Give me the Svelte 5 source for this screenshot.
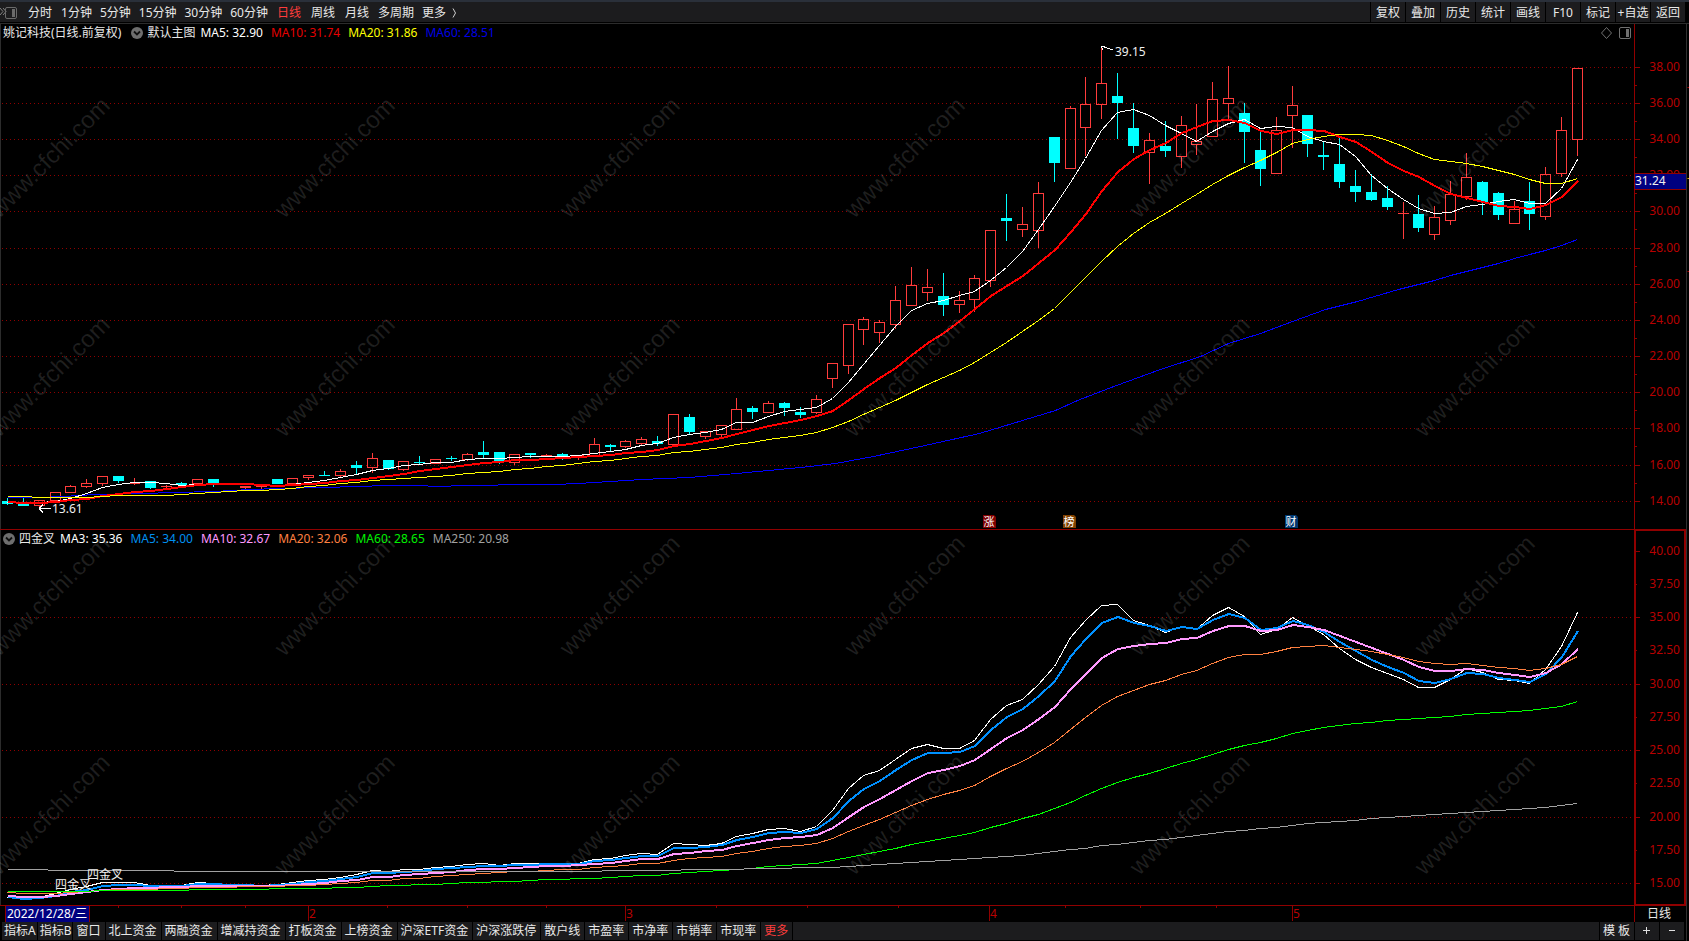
<script>
  const periods = [
    { label: '分时', wide: true }, { label: '1分钟' }, { label: '5分钟' }, { label: '15分钟' },
    { label: '30分钟' }, { label: '60分钟' }, { label: '日线', wide: true, active: true },
    { label: '周线', wide: true }, { label: '月线', wide: true }, { label: '多周期' }
  ];
  const tools = ['复权', '叠加', '历史', '统计', '画线', 'F10', '标记', '+自选', '返回'];
  const tabs = ['指标A', '指标B', '窗口', '北上资金', '两融资金', '增减持资金', '打板资金', '上榜资金', '沪深ETF资金',
    '沪深涨跌停', '散户线', '市盈率', '市净率', '市销率', '市现率', '更多'];

  const mainLegend = [
    ['MA5: 32.90', '#ffffff'], ['MA10: 31.74', '#e60000'], ['MA20: 31.86', '#ffff00'], ['MA60: 28.51', '#0000e6']
  ];
  const subLegend = [
    ['MA3: 35.36', '#ffffff'], ['MA5: 34.00', '#0090f0'], ['MA10: 32.67', '#ff99ff'],
    ['MA20: 32.06', '#ff8040'], ['MA60: 28.65', '#00f000'], ['MA250: 20.98', '#a0a0a0']
  ];

  // Each candle: direction (1 up, 0 down), high, body top, body bottom, low, as levels on the price pane.
  const candles = [
    [0,498,501,504,505],[0,498,504,506,506],[1,500,500,506,507],[1,492,492,501,501],[1,485,486,493,493],
    [1,479,483,487,488],[1,476,476,484,486],[0,476,476,481,483],[1,478,483,484,485],[0,481,481,488,489],
    [1,485,486,487,489],[0,482,483,485,485],[1,479,479,484,484],[0,479,479,483,487],[0,483,483,485,485],
    [1,486,486,488,489],[1,485,486,487,489],[0,479,479,484,484],[1,478,478,484,484],[1,475,475,478,480],
    [0,471,475,476,476],[1,469,471,476,477],[0,461,465,468,475],[1,453,458,468,473],[0,460,460,469,470],
    [1,461,461,470,471],[0,456,462,463,465],[1,459,459,464,464],[0,456,458,459,461],[1,453,454,460,461],
    [0,441,452,455,458],[0,452,452,461,464],[1,454,454,463,465],[0,453,453,455,458],[1,454,455,456,457],
    [0,453,454,456,460],[1,455,455,456,460],[1,438,444,457,457],[0,444,445,447,451],[1,440,441,447,448],
    [1,437,439,444,445],[0,436,441,444,446],[1,414,414,445,445],[0,414,417,432,434],[1,431,431,437,439],
    [1,425,425,435,437],[1,398,409,430,430],[0,406,408,412,419],[1,401,403,413,413],[0,402,403,408,416],
    [0,407,412,415,418],[1,395,399,413,414],[1,363,363,379,388],[1,324,324,366,374],[1,317,319,330,345],
    [1,320,322,333,343],[1,286,300,325,329],[1,267,285,306,306],[1,269,287,293,301],[0,273,296,305,316],
    [1,291,300,305,313],[1,275,278,300,312],[1,230,230,281,287],[0,194,218,221,241],[1,207,224,230,237],
    [1,182,193,231,248],[0,137,137,163,182],[1,106,108,169,169],[1,77,104,128,156],[1,47,83,105,119],
    [0,73,96,103,139],[0,103,128,146,153],[1,133,140,153,184],[0,121,146,151,157],[1,116,125,157,168],
    [1,104,141,145,155],[1,82,99,137,137],[1,66,98,104,119],[0,103,113,132,163],[0,132,150,169,186],
    [1,117,130,174,174],[1,86,105,116,148],[0,115,115,144,157],[0,142,155,157,170],[0,138,164,182,188],
    [0,170,186,192,202],[0,174,192,200,201],[0,186,198,207,210],[1,202,213,214,239],[0,195,214,228,232],
    [1,206,217,235,240],[1,181,194,221,225],[1,153,177,197,200],[0,181,182,202,215],[0,192,193,215,220],
    [1,201,209,224,224],[0,182,201,214,230],[1,167,174,217,220],[1,117,130,174,177],[1,68,68,140,156]
  ];
  const closes = candles.map((c) => (c[0] ? c[2] : c[3]));
  const history = [...Array(10).fill(490), ...Array(9).fill(501)];
  const series = [...history, ...closes];

  function sma(n) {
    return closes.map((_, i) => {
      const end = i + history.length + 1;
      return series.slice(end - n, end).reduce((a, b) => a + b, 0) / n;
    });
  }

  const toPrice = (y) => 38 - (y - 67) / 18.08;
  function ema(n, seed) {
    const a = 2 / (n + 1);
    let v = seed;
    return closes.map((c, i) => {
      if (i) v = a * toPrice(c) + (1 - a) * v;
      return 617 - (v - 35) * 13.3;
    });
  }

  // Long average of the price pane: [bar, level] knots.
  const slow = [
    [0,497],[2,497],[3.5,495.5],[5.5,494],[8.5,493],[10.5,492],[13,491],[15.3,489],[17,488],[20,487],[22,486],
    [24,485],[26,485],[27,486],[29,485],[33,484],[34.5,484],[36,483],[38,481],[40,479],[43,476.5],[46,473],
    [48,470],[50,467],[52.2,463],[54.6,456],[57.6,445.5],[61.3,433],[64,420],[66.1,409.5],[67.5,399.6],
    [69.9,384.5],[72.7,369],[75.2,355.7],[77,342.6],[79,333],[81,321],[83.1,309],[85.1,301],[87.7,289],
    [89,284],[90,280],[91,275],[92,271],[93,267],[94,263],[95,258],[96,254],[97,250],[98,245],[99,238.7]
  ];

  const averages = [
    { v: sma(5), c: '#ffffff', s: 1 }, { v: sma(10), c: '#ff0000', s: 2 }, { v: sma(20), c: '#ffff00', s: 1 }
  ];
  const golden = [
    { v: ema(3, 13.95), c: '#ffffff', s: 1 }, { v: ema(5, 14), c: '#0090ff', s: 2 },
    { v: ema(10, 14.1), c: '#ff99ff', s: 2 }, { v: ema(20, 14.3), c: '#ff8040', s: 1 },
    { v: ema(60, 14.4), c: '#00ff00', s: 1 }, { v: ema(250, 16.05), c: '#a0a0a0', s: 1 }
  ];

  const mainTicks = [67,103,139,175,211,248,284,320,356,392,428,465,501].map((y, i) => ({ y, t: (38 - i * 2).toFixed(2) }));
  const subTicks = Array.from({ length: 11 }, (_, i) => ({
    y: Math.round(550.5 + i * 33.28), t: (40 - i * 2.5).toFixed(2), major: i % 2 === 0
  }));
  const badges = [
    { x: 989, t: '涨', c: '#800000' }, { x: 1069, t: '榜', c: '#804000' }, { x: 1291, t: '财', c: '#003870' }
  ];
  const months = [[308, '2'], [625, '3'], [989, '4'], [1292, '5']];
  const minor = [118, 181, 245, 387, 467, 546, 716, 807, 898, 1065, 1140, 1216];

  let w = $state(1634);
  let hMain = $state(487);
  let hSub = $state(357);
  let pageW = $state(1689);
  let pageH = $state(941);

  const X = (i) => Math.round(7 + (i * (w - 64)) / 99);
  const sx = (x) => Math.round(7 + ((x - 7) * (w - 64)) / 1570);
  const M = (y) => Math.round(((y - 42) * hMain) / 487);
  const S = (y) => Math.round(((y - 548) * hSub) / 357);
  // Odd widths are centred on a pixel, even widths on a pixel edge.
  const path = (a, f) => {
    const o = a.s === 1 ? 0.5 : 1;
    return a.v.map((y, i) => `${X(i) + o},${f(y) + o}`).join(' ');
  };

  const marks = $derived.by(() => {
    const out = [];
    for (let y = 159; y < pageH; y += 219) for (let x = 51; x < pageW; x += 285) out.push([x, y]);
    return out;
  });
</script>

{#snippet fold()}
  <svg class="fold" width="12" height="12" viewBox="0 0 12 12" aria-hidden="true">
    <circle cx="6" cy="6" r="6" fill="#6e6e6e" />
    <path d="M3 4.5 6 7.5 9 4.5" fill="none" stroke="#101010" stroke-width="1.8" />
  </svg>
{/snippet}

<div class="app" bind:clientWidth={pageW} bind:clientHeight={pageH}>
  <header>
    <button class="dock" aria-label="侧栏">
      <svg width="18" height="14" viewBox="0 0 18 14" fill="none" stroke="#808080">
        <path d="M0 2 3 5.5 0 9M3 2 6 5.5 3 9" />
        <rect x="5.5" y="1.5" width="11" height="11" rx="1.5" stroke="#6a6a6a" />
        <rect x="12" y="3" width="3" height="8" fill="#6a6a6a" stroke="none" />
      </svg>
    </button>
    <nav class="periods">
      {#each periods as p}
        <button class:wide={p.wide} class:active={p.active}>{p.label}</button>
      {/each}
      <button class="more">更多
        <svg width="5" height="10" viewBox="0 0 5 10" aria-hidden="true"><path d="M1 0.5 3.5 5 1 9.5" fill="none" stroke="#d0d0d0" /></svg>
      </button>
    </nav>
    <nav class="tools">
      {#each tools as t}<button>{t}</button>{/each}
    </nav>
  </header>

  <div class="body">
    <main>
      <section class="pane price">
        <div class="plot">
          <div class="legend">
            <span class="name">姚记科技(日线.前复权)</span>
            {@render fold()}
            <span class="ind">默认主图</span>
            {#each mainLegend as [t, c]}<span class="val" style:color={c}>{t}</span>{/each}
            <span class="corner">
              <svg width="30" height="12" viewBox="0 0 30 12" fill="none" stroke="#707070" aria-hidden="true">
                <path d="M5.5.5 10.5 6 5.5 11.5.5 6Z" />
                <rect x="18.5" y="0.5" width="11" height="11" rx="1.5" />
                <rect x="25" y="2" width="3" height="8" fill="#707070" stroke="none" />
              </svg>
            </span>
          </div>
          <div class="canvas" bind:clientWidth={w} bind:clientHeight={hMain}>
            <svg class="chart">
              <g class="crisp">
                {#each mainTicks as g}
                  <line class="grid" x1="2" x2={w} y1={M(g.y) + 0.5} y2={M(g.y) + 0.5} />
                {/each}
                {#each candles as [up, hi, top, bot, lo], i}
                  {@const x = X(i)}
                  {@const t = M(top)}
                  {@const b = Math.max(M(bot), t + 1)}
                  <path stroke={up ? '#ff3c3c' : '#00ffff'} d="M{x + 0.5} {M(hi)}V{t}M{x + 0.5} {b}V{M(lo)}" />
                  {#if up && b - t > 1}
                    <rect x={x - 4.5} y={t + 0.5} width="10" height={b - t - 1} fill="none" stroke="#ff3c3c" />
                  {:else}
                    <rect x={x - 5} y={t} width="11" height={b - t} fill={up ? '#ff3c3c' : '#00ffff'} />
                  {/if}
                {/each}
                <polyline fill="none" stroke="#0000ff" points={slow.map(([i, y]) => `${X(i) + 0.5},${M(y) + 0.5}`).join(' ')} />
                {#each averages as a}
                  <polyline fill="none" stroke={a.c} stroke-width={a.s} points={path(a, M)} />
                {/each}
                <path class="arrow" d="M{sx(1101)} {M(46)}l12 4m-12 -4h4m-4 0l2 4" />
                <path class="arrow" d="M{sx(39)} {M(508) + 0.5}h12m-12 0l4 -4m-4 4l4 4" />
              </g>
              <text class="note" x={sx(1115)} y={M(52) + 4}>39.15</text>
              <text class="note" x={sx(52)} y={M(508) + 5}>13.61</text>
              {#each badges as b}
                <path d="M{sx(b.x) - 6} {M(515)}h11l2 2v11h-13z" fill={b.c} />
                <text class="badge" x={sx(b.x)} y={M(515) + 11}>{b.t}</text>
              {/each}
            </svg>
          </div>
        </div>
        <div class="axis">
          <div class="axis-head"></div>
          <svg class="scale">
            {#each mainTicks as g, i}
              <rect x="0" y={M(g.y)} width="5" height="1" fill="#900000" />
              {#if i < 12}<rect x="0" y={M(g.y + 18)} width="2" height="1" fill="#900000" />{/if}
              <text class="tick" x="45" y={M(g.y) + 4}>{g.t}</text>
            {/each}
            <rect x="0" y={M(173)} width="51" height="17" fill="#900000" />
            <rect x="0" y={M(173) + 1} width="51" height="15" fill="#000080" />
            <text class="note" x="0" y={M(173) + 12}>31.24</text>
          </svg>
        </div>
      </section>

      <section class="pane sub">
        <div class="plot">
          <div class="legend low">
            {@render fold()}
            <span class="ind">四金叉</span>
            {#each subLegend as [t, c]}<span class="val" style:color={c}>{t}</span>{/each}
          </div>
          <div class="canvas" bind:clientHeight={hSub}>
            <svg class="chart">
              <g class="crisp">
                {#each subTicks as g, i}
                  {#if g.major && i > 0}
                    <line class="grid" x1="2" x2={w} y1={S(g.y) + 0.5} y2={S(g.y) + 0.5} />
                  {/if}
                {/each}
                {#each golden as a}
                  <polyline fill="none" stroke={a.c} stroke-width={a.s} points={path(a, S)} />
                {/each}
              </g>
              <text class="note" x={sx(55)} y={S(884) + 5}>四金叉</text>
              <text class="note" x={sx(87)} y={S(874) + 5}>四金叉</text>
            </svg>
          </div>
        </div>
        <div class="axis boxed">
          <div class="axis-head"></div>
          <svg class="scale">
            {#each subTicks as g}
              <rect x="0" y={S(g.y)} width={g.major ? 4 : 1} height="1" fill="#900000" />
              <text class="tick" x="44" y={S(g.y) + 4}>{g.t}</text>
            {/each}
          </svg>
        </div>
      </section>

      <section class="dates">
        <svg class="timeline">
          {#each minor as m}<rect x={sx(m)} y="0" width="1" height="2" fill="#900000" />{/each}
          {#each months as [m, t]}
            <rect x={sx(m)} y="0" width="1" height="15" fill="#900000" />
            <text class="month" x={sx(m) + 1} y="12">{t}</text>
          {/each}
        </svg>
        <time datetime="2022-12-28">2022/12/28/三</time>
        <span class="unit">日线</span>
      </section>

      <footer>
        {#each tabs as t, i}
          <button class:tight={i < 2} class:active={t === '更多'}>{t}</button>
        {/each}
        <span class="fill"></span>
        <button class="template">模 板</button>
        <button class="zoom" aria-label="放大">
          <svg width="8" height="8" viewBox="0 0 8 8"><path d="M0 3.5h7M3.5 0v7" stroke="#e0e0e0" /></svg>
        </button>
        <button class="zoom" aria-label="缩小">
          <svg width="8" height="8" viewBox="0 0 8 8"><path d="M1 3.5h6" stroke="#e0e0e0" /></svg>
        </button>
      </footer>
    </main>
    <aside>
      <svg width="3" height="280" aria-hidden="true">
        <path d="M1.5 63.5H3M1.5 247.5H3" stroke="#b00000" />
        <path d="M1.5 154.5H3" stroke="#e0b000" />
      </svg>
    </aside>
  </div>

  <svg class="marks" aria-hidden="true">
    {#each marks as [x, y]}
      <text transform="translate({x} {y}) rotate(-45)" dy="6">www.cfchi.com</text>
    {/each}
  </svg>
</div>

<style>
  :global(body) { background: #000; }
  .app {
    position: relative;
    display: flex;
    flex-direction: column;
    height: 100vh;
    overflow: hidden;
    background: #000;
    color: #e8e8e8;
    font: 12px/16px "Noto Sans", "Noto Sans CJK SC", sans-serif;
  }
  button {
    padding: 0;
    border: 0;
    background: none;
    color: inherit;
    font: inherit;
    white-space: nowrap;
    cursor: pointer;
  }
  button.active { color: #ff3c3c; }
  header {
    box-sizing: border-box;
    flex: none;
    display: flex;
    height: 24px;
    border-top: 2px solid #2a303a;
    border-bottom: 1px solid #2c2c2c;
    background: #1c1c1e;
    box-shadow: inset 0 -1px #000;
  }
  .dock { display: flex; align-items: center; width: 27px; }
  .periods { flex: 1; display: flex; gap: 8px; padding-top: 1px; }
  .wide { padding: 0 1px; }
  .more { display: flex; align-items: center; gap: 6px; }
  .tools { display: flex; padding: 0 4px 1px 0; background: #000; }
  .tools button { width: 34px; margin-left: 1px; padding-top: 2px; background: #1c1c1e; }
  .body { flex: 1; display: flex; min-height: 0; }
  main { flex: 1; display: flex; flex-direction: column; min-width: 0; }
  aside { flex: none; width: 3px; box-shadow: inset 1px 0 #303030; }
  aside svg { display: block; }
  .pane { display: flex; min-height: 0; box-sizing: border-box; border-bottom: 1px solid #900000; }
  .price { flex: 506 1 0; }
  .sub { flex: 376 1 0; }
  .plot {
    flex: 1;
    display: flex;
    flex-direction: column;
    min-width: 0;
    box-shadow: inset 1px 0 #2c2c2c;
  }
  .legend { flex: none; display: flex; align-items: center; height: 18px; padding-left: 3px; white-space: nowrap; }
  .fold { flex: none; margin: 0 4px 0 10px; }
  .low .fold { margin-left: 0; }
  .ind { margin-right: 5px; }
  .val { margin-right: 8px; }
  .corner { margin-left: auto; padding-right: 3px; display: flex; }
  .canvas { flex: 1; min-height: 0; overflow: hidden; }
  .chart { display: block; width: 100%; height: 100%; }
  .crisp { shape-rendering: crispEdges; }
  .grid { stroke: #900000; stroke-dasharray: 1 3; }
  .arrow { fill: none; stroke: #fff; }
  .note { fill: #f0f0f0; }
  .badge { fill: #fff; font-size: 11px; text-anchor: middle; }
  .tick { fill: #b80000; text-anchor: end; }
  .axis {
    box-sizing: border-box;
    flex: none;
    display: flex;
    flex-direction: column;
    width: 52px;
    border-left: 1px solid #900000;
  }
  .boxed { border-left-width: 2px; border-right: 2px solid #900000; box-shadow: inset 0 -1px #900000, inset 0 1px #900000; }
  .axis-head { flex: none; height: 18px; }
  .scale { display: block; flex: 1; width: 100%; min-height: 0; overflow: visible; }
  .dates { flex: none; position: relative; display: flex; height: 16px; }
  .timeline { flex: 1; height: 16px; min-width: 0; }
  .month { fill: #b80000; }
  time {
    position: absolute;
    left: 5px;
    top: 0;
    padding: 0 2px 0 1px;
    border: solid #900000;
    border-width: 0 1px;
    background: #000080;
    color: #fff;
  }
  .unit { box-sizing: border-box; width: 52px; padding-left: 12px; border-left: 1px solid #900000; }
  footer { flex: none; display: flex; gap: 1px; height: 18px; padding: 0 2px 1px; }
  footer button, .fill { background: #1c1c1e; }
  footer button { padding: 0 4px 0 3px; }
  footer .tight { padding: 0 1px 0 2px; }
  .fill { flex: 1; min-width: 0; }
  footer .zoom { display: flex; align-items: center; justify-content: center; width: 24px; padding: 0; }
  .marks { position: absolute; inset: 0; width: 100%; height: 100%; pointer-events: none; }
  .marks text { fill: #fff; fill-opacity: 0.12; font: 24px "Liberation Sans", sans-serif; text-anchor: middle; }
</style>
